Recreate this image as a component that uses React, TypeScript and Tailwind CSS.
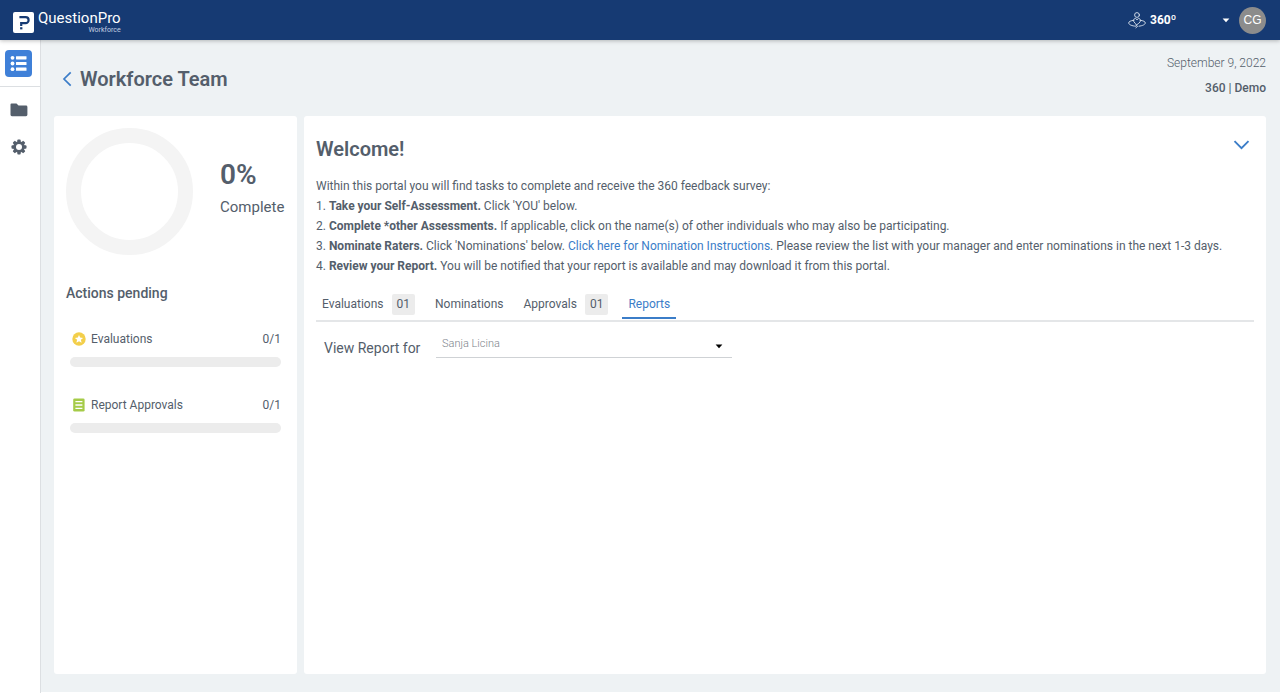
import type { ReactNode } from "react";

type PendingAction = {
  label: string;
  done: number;
  total: number;
  icon: ReactNode;
};

type PortalTab = {
  label: string;
  count?: string;
  active?: boolean;
};

const pendingActions: PendingAction[] = [
  { label: "Evaluations", done: 0, total: 1, icon: <StarBadgeIcon /> },
  { label: "Report Approvals", done: 0, total: 1, icon: <SheetIcon /> },
];

const tabs: PortalTab[] = [
  { label: "Evaluations", count: "01" },
  { label: "Nominations" },
  { label: "Approvals", count: "01" },
  { label: "Reports", active: true },
];

function StarBadgeIcon() {
  return (
    <svg viewBox="0 0 14 14" className="size-[14px]" aria-hidden="true">
      <circle cx="7" cy="7" r="6.7" fill="#f3cf4b" />
      <path
        d="M7 2.9l1.2 2.7 2.9.3-2.2 1.9.7 2.9L7 9.2l-2.6 1.5.7-2.9-2.2-1.9 2.9-.3z"
        fill="#fff"
      />
    </svg>
  );
}

function SheetIcon() {
  return (
    <svg viewBox="0 0 14 14" className="size-[14px]" aria-hidden="true">
      <rect x="1.2" y="0.4" width="11.4" height="13.2" rx="1.4" fill="#a5cb48" />
      <path d="M3.4 3.6h7M3.4 7h7M3.4 10.4h7" stroke="#fff" strokeWidth="1.3" />
    </svg>
  );
}

function LogoMark() {
  return (
    <svg viewBox="0 0 21 21" className="size-[21px]" aria-hidden="true">
      <rect width="21" height="21" rx="2" fill="#fff" />
      <path
        d="M6.4 5.2h6.2a2.9 2.9 0 0 1 0 6H8.2V14"
        fill="none"
        stroke="#163a73"
        strokeWidth="2.2"
      />
      <rect x="7.1" y="15.2" width="2.3" height="2.2" fill="#163a73" />
    </svg>
  );
}

function OrbitPersonIcon() {
  return (
    <svg
      viewBox="0 0 18 17"
      className="h-[17px] w-[18px]"
      fill="none"
      stroke="#dfe6f1"
      strokeWidth="0.9"
      strokeLinecap="round"
      strokeLinejoin="round"
      aria-hidden="true"
    >
      <circle cx="9" cy="3" r="2.4" />
      <path d="M7.3 11.4L5.8 9.7V8c0-1 .8-1.6 1.7-1.6L9 7.8l1.5-1.4c.9 0 1.7.6 1.7 1.6v1.7l-1.5 1.7L9 12.6z" />
      <path d="M5.6 8.3C2.6 8.7.7 9.6.7 10.9c0 1.7 3.1 3.1 7.1 3.3M12.4 8.3c3 .4 4.9 1.300 4.900 2.600 0 1.600-2.700 2.900-6.300 3.300" />
      <path d="M7.9 12.9l1.7 1.4-1.7 1.5" />
    </svg>
  );
}

function ListIcon() {
  return (
    <svg viewBox="0 0 17 17" className="size-[17px]" fill="#fff" aria-hidden="true">
      <circle cx="2.5" cy="2.8" r="1.9" />
      <circle cx="2.5" cy="8.5" r="1.9" />
      <circle cx="2.5" cy="14.2" r="1.9" />
      <rect x="6" y="1.2" width="10.5" height="3.2" rx=".4" />
      <rect x="6" y="6.9" width="10.5" height="3.2" rx=".4" />
      <rect x="6" y="12.6" width="10.5" height="3.2" rx=".4" />
    </svg>
  );
}

function FolderIcon() {
  return (
    <svg viewBox="0 0 18 14" className="h-[14px] w-[18px]" aria-hidden="true">
      <path
        d="M1.5.5h5l2 2h7.5a1.4 1.4 0 0 1 1.4 1.4v7.9a1.4 1.4 0 0 1-1.4 1.4H1.9A1.4 1.4 0 0 1 .5 11.8V1.5a1 1 0 0 1 1-1z"
        fill="#545e6b"
      />
    </svg>
  );
}

function GearIcon() {
  return (
    <svg viewBox="0 0 16 16" className="size-[16px]" fill="#545e6b" aria-hidden="true">
      {[0, 45, 90, 135].map((angle) => (
        <rect
          key={angle}
          x="6.3"
          y=".5"
          width="3.4"
          height="15"
          rx=".9"
          transform={`rotate(${angle} 8 8)`}
        />
      ))}
      <circle cx="8" cy="8" r="5.8" />
      <circle cx="8" cy="8" r="3" fill="#fff" />
    </svg>
  );
}

function CaretDown({ className }: { className: string }) {
  return (
    <svg viewBox="0 0 8 5" className={`h-[5px] w-[8px] ${className}`} fill="currentColor" aria-hidden="true">
      <path d="M.6.5h6.8L4 4.3z" />
    </svg>
  );
}

function Header() {
  return (
    <header className="relative z-10 flex h-10 items-center justify-between bg-[#163a73] pr-[14px] pl-[13px] text-white shadow-[0_1px_4px_rgba(0,0,0,0.25)]">
      <a href="#home" className="flex items-center gap-1 pt-1">
        <LogoMark />
        <span className="flex flex-col items-end">
          <span className="text-[15px] leading-[17px]">QuestionPro</span>
          <span className="text-[7px] leading-[7px] text-[#c5d0e2]">Workforce</span>
        </span>
      </a>
      <div className="flex items-center">
        <button type="button" className="flex items-center gap-1">
          <OrbitPersonIcon />
          <span className="w-[68px] text-left text-[12px] leading-4 font-bold">360º</span>
          <CaretDown className="text-white" />
        </button>
        <button
          type="button"
          className="ml-[9px] flex size-[27px] items-center justify-center rounded-full bg-[#8c8c8c] font-['Liberation_Sans',sans-serif] text-[12px]"
        >
          CG
        </button>
      </div>
    </header>
  );
}

function Sidebar() {
  return (
    <nav aria-label="Main" className="flex w-[41px] shrink-0 flex-col border-r border-[#dcdfe2] bg-white">
      <div className="flex h-[47px] items-center border-b border-[#dcdfe2] pl-[5px]">
        <a
          href="#portal"
          aria-label="Portal"
          className="flex size-[27px] items-center justify-center rounded-sm bg-[#3f80d8]"
        >
          <ListIcon />
        </a>
      </div>
      <div className="flex flex-col items-center pt-1 pr-[2px]">
        <a href="#files" aria-label="Files" className="flex h-[38px] items-center">
          <FolderIcon />
        </a>
        <a href="#settings" aria-label="Settings" className="flex h-9 items-center">
          <GearIcon />
        </a>
      </div>
    </nav>
  );
}

function ProgressCard() {
  return (
    <section className="w-[243px] shrink-0 rounded-[3px] bg-white p-3">
      <div className="flex items-center gap-[27px]">
        <div className="size-[127px] shrink-0 rounded-full border-[15px] border-[#f4f4f4]" />
        <div className="pb-[2px]">
          <p className="text-[28px] leading-8 font-semibold">0%</p>
          <p className="text-[15px] leading-8">Complete</p>
        </div>
      </div>
      <h2 className="mt-7 text-[14px] leading-5 font-medium">Actions pending</h2>
      <ul className="mt-[22px] flex flex-col gap-6 px-1">
        {pendingActions.map((action) => (
          <li key={action.label}>
            <div className="flex items-center pl-[2px] text-[12px] leading-7">
              {action.icon}
              <span className="ml-[5px] flex-1">{action.label}</span>
              <span>
                {action.done}/{action.total}
              </span>
            </div>
            <div className="mt-1 h-[10px] overflow-hidden rounded-full bg-[#ececec]">
              <div
                className="h-full bg-[#3f80d8]"
                style={{ width: `${(action.done / action.total) * 100}%` }}
              />
            </div>
          </li>
        ))}
      </ul>
    </section>
  );
}

function Tabs() {
  return (
    <div role="tablist" className="mt-[14px] flex h-8 items-end gap-2 border-b-2 border-[#e4e6e8] pb-px">
      {tabs.map((tab) => (
        <button
          key={tab.label}
          type="button"
          role="tab"
          aria-selected={Boolean(tab.active)}
          className={
            tab.active
              ? "flex h-7 items-center border-b-2 border-[#3b7dc8] px-[6px] text-[12px] text-[#3b7dc8]"
              : "flex h-7 items-center gap-2 border-b-2 border-transparent px-[6px] text-[12px]"
          }
        >
          {tab.label}
          {tab.count ? (
            <span className="rounded-xs bg-[#ececec] px-[5px] leading-[21px]">{tab.count}</span>
          ) : null}
        </button>
      ))}
    </div>
  );
}

function WelcomeCard() {
  return (
    <section className="min-w-0 flex-1 rounded-[3px] bg-white p-3">
      <div className="flex items-start justify-between pt-[5px]">
        <h2 className="text-[20px] leading-8 font-semibold">Welcome!</h2>
        <button type="button" aria-label="Collapse" className="mt-[7px] mr-1 text-[#3b7dc8]">
          <svg viewBox="0 0 17 10" className="h-[10px] w-[17px]" fill="none" aria-hidden="true">
            <path d="M1.5 1.2l7 7 7-7" stroke="currentColor" strokeWidth="1.9" />
          </svg>
        </button>
      </div>
      <div className="mt-[11px] text-[12px] leading-5">
        <p>Within this portal you will find tasks to complete and receive the 360 feedback survey:</p>
        <p>
          1. <b>Take your Self-Assessment.</b> Click 'YOU' below.
        </p>
        <p>
          2. <b>Complete *other Assessments.</b> If applicable, click on the name(s) of other
          individuals who may also be participating.
        </p>
        <p>
          3. <b>Nominate Raters.</b> Click 'Nominations' below.{" "}
          <a href="#instructions" className="text-[#3b7dc8]">
            Click here for Nomination Instructions
          </a>
          . Please review the list with your manager and enter nominations in the next 1-3 days.
        </p>
        <p>
          4. <b>Review your Report.</b> You will be notified that your report is available and may
          download it from this portal.
        </p>
      </div>
      <Tabs />
      <div className="mt-2 flex items-center pl-2">
        <label htmlFor="report-for" className="w-28 pt-[6px] text-[14px] leading-6">
          View Report for
        </label>
        <div className="relative w-[296px]">
          <select
            id="report-for"
            className="block h-[26px] w-full appearance-none border-b border-[#cfd2d5] bg-transparent px-[6px] text-[11px] font-light text-[#7d838b]"
          >
            <option>Sanja Licina</option>
          </select>
          <CaretDown className="pointer-events-none absolute top-3 right-[9px] text-black" />
        </div>
      </div>
    </section>
  );
}

export default function App() {
  return (
    <div className="flex min-h-screen flex-col bg-[#eef2f4] font-[Roboto,sans-serif] text-[#545e6b]">
      <Header />
      <div className="flex flex-1">
        <Sidebar />
        <main className="flex min-w-0 flex-1 flex-col border-b border-white pt-[11px] pr-[14px] pb-[18px] pl-[13px]">
          <div className="flex h-[65px] items-start justify-between">
            <div className="flex items-center gap-2 pt-3 pl-2">
              <a href="#back" aria-label="Back" className="text-[#3b7dc8]">
                <svg viewBox="0 0 10 16" className="h-4 w-[10px]" fill="none" aria-hidden="true">
                  <path d="M8.7 1.3L2 8l6.7 6.7" stroke="currentColor" strokeWidth="1.7" />
                </svg>
              </a>
              <h1 className="text-[20px] leading-8 font-semibold">Workforce Team</h1>
            </div>
            <div className="text-right text-[12px] leading-[25px]">
              <p className="font-light">September 9, 2022</p>
              <p className="font-medium">360 | Demo</p>
            </div>
          </div>
          <div className="flex flex-1 gap-[7px]">
            <ProgressCard />
            <WelcomeCard />
          </div>
        </main>
      </div>
    </div>
  );
}
